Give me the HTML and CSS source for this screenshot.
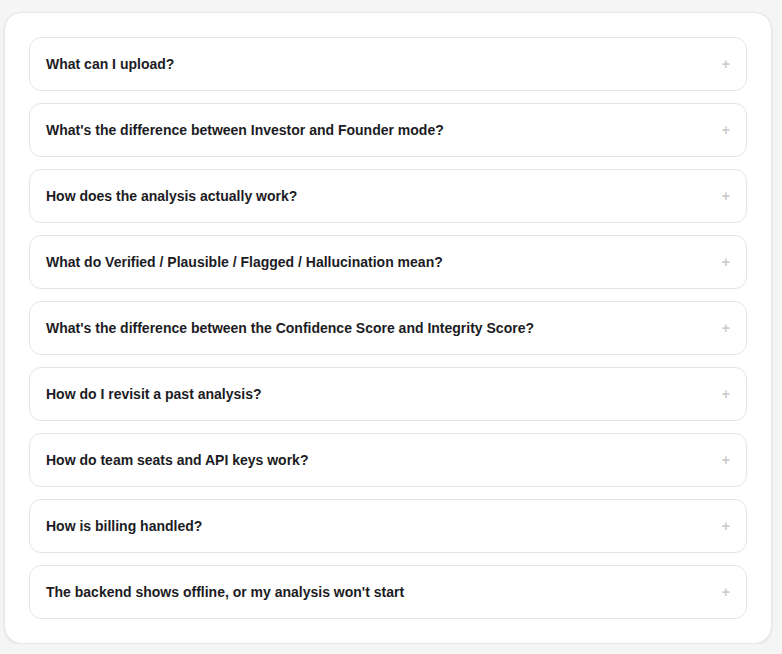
FILE: index.html
```html
<!DOCTYPE html>
<html lang="en">
<head>
  <meta charset="UTF-8" />
  <meta name="viewport" content="width=device-width, initial-scale=1.0"/>
  <title>FAQ</title>
  <link rel="stylesheet" href="styles.css">
</head>
<body>

  <!-- FAQ card -->
  <div class="faq-card">
    <div class="faq-item"><span>What can I upload?</span><span class="plus">+</span></div>
    <div class="faq-item"><span>What's the difference between Investor and Founder mode?</span><span class="plus">+</span></div>
    <div class="faq-item"><span>How does the analysis actually work?</span><span class="plus">+</span></div>
    <div class="faq-item"><span>What do Verified / Plausible / Flagged / Hallucination mean?</span><span class="plus">+</span></div>
    <div class="faq-item"><span>What's the difference between the Confidence Score and Integrity Score?</span><span class="plus">+</span></div>
    <div class="faq-item"><span>How do I revisit a past analysis?</span><span class="plus">+</span></div>
    <div class="faq-item"><span>How do team seats and API keys work?</span><span class="plus">+</span></div>
    <div class="faq-item"><span>How is billing handled?</span><span class="plus">+</span></div>
    <div class="faq-item"><span>The backend shows offline, or my analysis won't start</span><span class="plus">+</span></div>
  </div>

</body>
</html>
```

FILE: styles.css
```css
body {
  font-family: 'Liberation Sans', Arial, sans-serif;
  background: #f5f5f5;
  margin: 0;
  padding: 12px 10px 0 4px;
  color: #1c1c24;
}

.faq-card {
  background: #fff;
  border: 1px solid #e6e6e6;
  border-radius: 18px;
  box-shadow: 0 1px 3px rgba(0, 0, 0, 0.08);
  padding: 24px;
  display: flex;
  flex-direction: column;
  gap: 12px;
}

.faq-item {
  display: flex;
  justify-content: space-between;
  align-items: center;
  height: 52px;
  padding: 0 16px;
  border: 1px solid #e4e4e4;
  border-radius: 12px;
  font-size: 14px;
  font-weight: bold;
}

.plus {
  color: #cccccc;
  font-size: 14px;
  font-weight: bold;
  line-height: 1;
}
```
